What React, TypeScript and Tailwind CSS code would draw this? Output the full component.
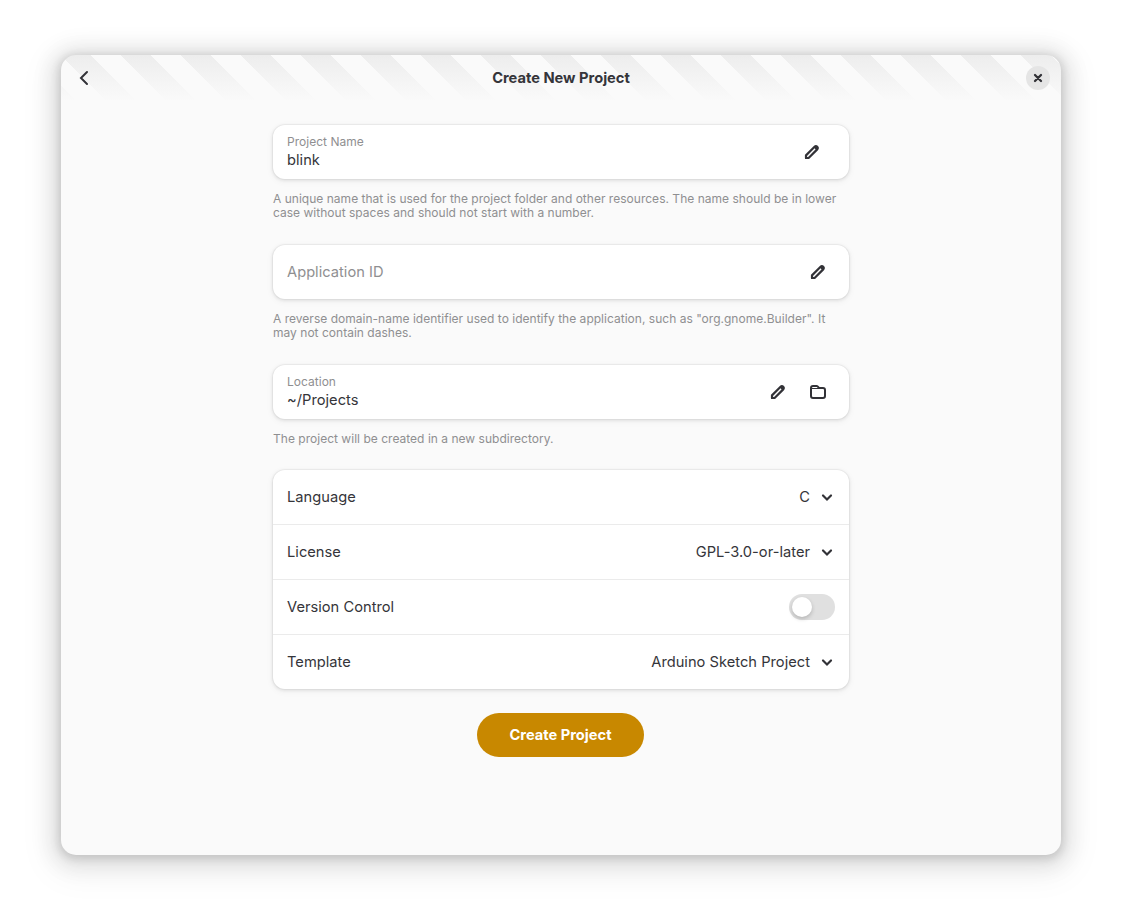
import type { ReactNode } from "react";

function PencilIcon() {
  return (
    <svg width="16" height="16" viewBox="0 0 16 16" fill="none">
      <path
        d="M2 14 L2 11.4 L10.6 2.8 C11.4 2 12.4 2 13.2 2.8 C14 3.6 14 4.6 13.2 5.4 L4.6 14 Z"
        stroke="#323237"
        strokeWidth="2.2"
        strokeLinejoin="round"
      />
      <path d="M1 15 V11 L5 15 Z M9.8 3.6 L12.4 6.2 L14 4 L12 2 Z" fill="#323237" />
    </svg>
  );
}

function FolderIcon() {
  return (
    <svg width="16" height="16" viewBox="0 0 16 16" fill="none">
      <path
        d="M1 4 V12 A2 2 0 0 0 3 14 H13 A2 2 0 0 0 15 12 V6 A2 2 0 0 0 13 4 H9 L7.6 2.4 A1.4 1.4 0 0 0 6.6 2 H3 A2 2 0 0 0 1 4 Z"
        stroke="#323237"
        strokeWidth="2"
      />
      <path d="M2 4.5 H9" stroke="#323237" strokeWidth="1" />
    </svg>
  );
}

function ChevronIcon() {
  return (
    <svg width="16" height="16" viewBox="0 0 16 16" fill="none">
      <path d="M4 6.5 L8 10.5 L12 6.5" stroke="#323237" strokeWidth="2.2" strokeLinecap="round" />
    </svg>
  );
}

function EntryCard({ label, value, children }: { label: string; value?: string; children: ReactNode }) {
  return (
    <div className="flex h-[54px] items-center rounded-xl bg-white pl-3.5 shadow-[0_0_0_1px_rgba(0,0,0,0.03),0_1px_3px_1px_rgba(0,0,0,0.07),0_2px_6px_2px_rgba(0,0,0,0.03)]">
      <div className="flex-1">
        {value ? (
          <div className="pb-0.5">
            <div className="text-[12px] leading-[18px] tracking-[0.02px] text-[#8f8f91]">{label}</div>
            <div className="leading-[18px]">{value}</div>
          </div>
        ) : (
          <div className="text-[#8f8f91]">{label}</div>
        )}
      </div>
      {children}
    </div>
  );
}

function Hint({ children }: { children: ReactNode }) {
  return <p className="mt-[13px] text-[12px] leading-[14px] tracking-[0.02px] text-[#8f8f91]">{children}</p>;
}

function Row({ label, children }: { label: string; children: ReactNode }) {
  return (
    <div className="flex h-[55px] items-center justify-between border-b border-[#ebebeb] pl-3.5 last:h-[54px] last:border-b-0">
      <span>{label}</span>
      {children}
    </div>
  );
}

function Choice({ children }: { children: ReactNode }) {
  return (
    <div className="flex items-center gap-[9px] pr-3.5">
      <span>{children}</span>
      <ChevronIcon />
    </div>
  );
}

export default function App() {
  return (
    <div className="h-[922px] w-[1122px] bg-white pt-[55px] pl-[61px] font-['Inter',sans-serif] text-[14.667px] leading-5 tracking-[0.02px] text-[#35353a]">
      <div className="flex h-[800px] w-[1000px] flex-col rounded-[15px] bg-[#fafafa] bg-[linear-gradient(to_bottom,rgba(250,250,250,0),#fafafa_46px),repeating-linear-gradient(45deg,#ededed_0px,#ededed_21.213px,#fafafa_21.213px,#fafafa_42.426px)] bg-[length:100%_60px] bg-no-repeat shadow-[0_2px_8px_2px_rgba(0,0,0,0.13),0_3px_20px_10px_rgba(0,0,0,0.09),0_8px_32px_16px_rgba(0,0,0,0.04)]">
        <header className="grid h-[46px] grid-cols-[1fr_auto_1fr] items-center">
          <button className="ml-[15px] size-4" aria-label="Back">
            <svg width="16" height="16" viewBox="0 0 16 16" fill="none">
              <path d="M11 2 L5 8 L11 14" stroke="#323237" strokeWidth="2" strokeLinecap="round" />
            </svg>
          </button>
          <h1 className="font-bold tracking-normal">Create New Project</h1>
          <button
            className="mr-[11px] flex size-6 items-center justify-center justify-self-end rounded-full bg-[#e5e5e5]"
            aria-label="Close"
          >
            <svg width="16" height="16" viewBox="0 0 16 16" fill="none">
              <path d="M5 5 L11 11 M11 5 L5 11" stroke="#323237" strokeWidth="2.3" strokeLinecap="round" />
            </svg>
          </button>
        </header>
        <main className="mx-auto mt-6 flex w-[576px] flex-col">
          <EntryCard label="Project Name" value="blink">
            <div className="pr-[29px]">
              <PencilIcon />
            </div>
          </EntryCard>
          <Hint>
            A unique name that is used for the project folder and other resources. The name should be in lower
            <br />
            case without spaces and should not start with a number.
          </Hint>
          <div className="mt-[25px]">
            <EntryCard label="Application ID">
              <div className="pr-[23px]">
                <PencilIcon />
              </div>
            </EntryCard>
          </div>
          <Hint>
            A reverse domain-name identifier used to identify the application, such as "org.gnome.Builder". It
            <br />
            may not contain dashes.
          </Hint>
          <div className="mt-[25px]">
            <EntryCard label="Location" value="~/Projects">
              <div className="flex gap-6 pr-[23px]">
                <PencilIcon />
                <FolderIcon />
              </div>
            </EntryCard>
          </div>
          <Hint>The project will be created in a new subdirectory.</Hint>
          <div className="mt-6 rounded-xl bg-white shadow-[0_0_0_1px_rgba(0,0,0,0.03),0_1px_3px_1px_rgba(0,0,0,0.07),0_2px_6px_2px_rgba(0,0,0,0.03)]">
            <Row label="Language">
              <Choice>C</Choice>
            </Row>
            <Row label="License">
              <Choice>GPL-3.0-or-later</Choice>
            </Row>
            <Row label="Version Control">
              <div className="mr-3.5 h-[26px] w-[46px] rounded-full bg-[#e0e0e0] p-[3px]">
                <div className="size-5 rounded-full bg-white shadow-[0_2px_4px_rgba(0,0,0,0.2)]" />
              </div>
            </Row>
            <Row label="Template">
              <Choice>Arduino Sketch Project</Choice>
            </Row>
          </div>
          <button className="mt-6 mr-px h-11 w-[167px] self-center rounded-full bg-[#c88800] font-bold tracking-normal text-white">
            Create Project
          </button>
        </main>
      </div>
    </div>
  );
}
